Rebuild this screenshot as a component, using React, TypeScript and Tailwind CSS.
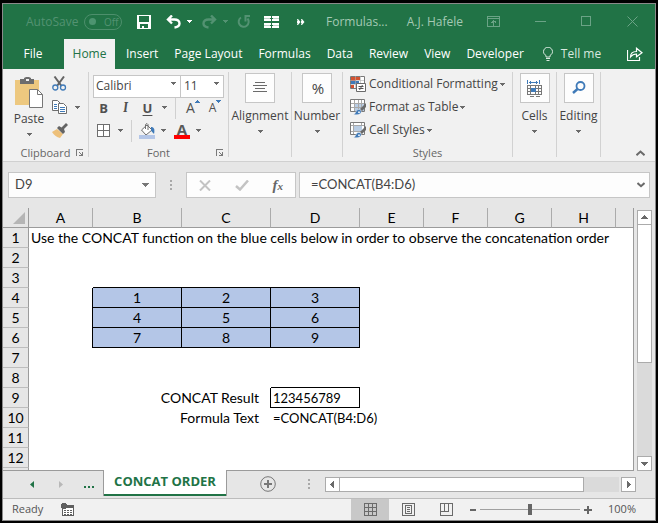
import type { ReactNode } from "react";

const CELL_FONT = "font-['Lato','Open_Sans',sans-serif]";

function Caret({ className = "text-[#6a6a6a]" }: { className?: string }) {
  return (
    <svg width="5" height="3" viewBox="0 0 5 3" shapeRendering="crispEdges" className={`shrink-0 fill-current ${className}`} aria-hidden="true">
      <path d="M0 0h5v1H4v1H3v1H2V2H1V1H0z" />
    </svg>
  );
}

function Launcher({ label }: { label: string }) {
  return (
    <button type="button" aria-label={label} className="absolute right-1 bottom-0">
      <svg width="8" height="8" viewBox="0 0 8 8" shapeRendering="crispEdges" className="fill-[#7a7a7a]">
        <path d="M0 0h7v1H1v6H0zM3 3h1v1h1v1h1V3h1v4H3V6h2V5H4V4H3z" />
      </svg>
    </button>
  );
}

/* ---------- Title bar ---------- */

function TitleBar() {
  return (
    <header className="flex h-[35px] items-center pr-[17px] pl-[23px] text-[12px] text-[#539272]">
      <label className="flex w-[96px] shrink-0 items-center justify-between">
        AutoSave
        <input type="checkbox" role="switch" className="peer sr-only" />
        <span className="flex h-4 w-[38px] items-center gap-2 rounded-full border border-[#4d8f6c] pl-1 text-[10px] leading-none">
          <span className="size-[7px] rounded-full bg-[#4d9470]" />
          Off
        </span>
      </label>
      <button type="button" aria-label="Save" className="ml-[15px] text-white">
        <svg width="14" height="14" viewBox="0 0 14 14" shapeRendering="crispEdges" fill="currentColor">
          <path fillRule="evenodd" d="M0 0h14v14H0zM2 1v6h10V1zM3 9v4h2v-2h2v2h4V9z" />
        </svg>
      </button>
      <button type="button" aria-label="Undo" className="ml-[15px] flex items-center gap-1.5 text-white">
        <svg width="15" height="14" viewBox="0 0 15 14" fill="none" stroke="currentColor" strokeWidth="2.400">
          <path d="M6 0.500 2 4.500l4 4M2 4.500h6.500c3 0 5 1.500 5 4 0 2.300-1.500 3.500-5 4" />
        </svg>
        <Caret className="text-white" />
      </button>
      <button type="button" aria-label="Redo" className="ml-[10px] flex items-center gap-1.5">
        <svg width="15" height="14" viewBox="0 0 15 14" fill="none" stroke="currentColor" strokeWidth="2.400">
          <path d="M9 0.500l4 4-4 4M13 4.500H6.500c-3 0-5 1.500-5 4 0 2.300 1.500 3.500 5 4" />
        </svg>
        <Caret className="text-[#539272]" />
      </button>
      <button type="button" aria-label="Repeat" className="ml-[9px]">
        <svg width="14" height="14" viewBox="0 0 14 14" fill="none" stroke="currentColor" strokeWidth="2">
          <path d="M4 2.500A5 5 0 1 0 10.500 3.500M8.500 6.500V1H13" />
        </svg>
      </button>
      <button type="button" aria-label="Arrange windows" className="ml-[13px] text-white">
        <svg width="15" height="12" viewBox="0 0 15 12" shapeRendering="crispEdges" fill="currentColor">
          <path d="M0 0h7v2H0zM8 0h7v2H8zM0 3h7v2H0zM8 3h7v2H8zM0 7h7v2H0zM8 7h7v2H8zM0 10h7v2H0zM8 10h7v2H8z" />
          <path d="M0 1h6v4H0zM9 1h6v4H9zM0 8h6v4H0zM9 8h6v4H9z" fillOpacity="0.7" />
        </svg>
      </button>
      <button type="button" aria-label="More commands" className="ml-[18px] text-white">
        <svg width="8" height="6" viewBox="0 0 8 6" fill="currentColor">
          <path d="M0 0h1l2.500 3L1 6H0l1-3zM4 0h1l2.500 3L5 6H4l1-3z" />
          <path d="M0 1.500 2 3 0 4.500zM4 1.500 6 3 4 4.500z" />
        </svg>
      </button>
      <span className="ml-[21px] text-[#a4c9b4]">Formulas...</span>
      <span className="mr-auto ml-[19px] whitespace-nowrap text-[#a4c9b4]">A.J. Hafele</span>
      <div className="flex items-center gap-[35px] text-[#6ba386]">
        <button type="button" aria-label="Ribbon display options">
          <svg width="13" height="11" viewBox="0 0 13 11" fill="none" stroke="currentColor" shapeRendering="crispEdges">
            <path d="M.5.500h12v10H.500zM1 2.500h11M6.500 4v6M4 6.500h1v-1h1M9 6.500H8v-1H7" />
          </svg>
        </button>
        <button type="button" aria-label="Minimize">
          <svg width="11" height="11" viewBox="0 0 11 11" stroke="currentColor" shapeRendering="crispEdges">
            <path d="M0 5.500h11" />
          </svg>
        </button>
        <button type="button" aria-label="Maximize">
          <svg width="11" height="11" viewBox="0 0 11 11" fill="none" stroke="currentColor" shapeRendering="crispEdges">
            <path d="M.5.500h9v9h-9z" />
          </svg>
        </button>
        <button type="button" aria-label="Close">
          <svg width="11" height="11" viewBox="0 0 11 11" stroke="currentColor">
            <path d="M.5.500l10 10M10.500.500l-10 10" />
          </svg>
        </button>
      </div>
    </header>
  );
}

/* ---------- Ribbon tabs ---------- */

const TABS = ["Insert", "Page Layout", "Formulas", "Data", "Review", "View", "Developer"];

function RibbonTabs() {
  return (
    <nav className="flex h-[30px] items-stretch pr-3 pl-3 text-[12px] whitespace-nowrap text-white">
      <button type="button" className="mr-[13px] w-9">File</button>
      <button type="button" className="w-[51px] bg-[#f1f1f1] text-[#217346]">Home</button>
      <div className="ml-[11px] flex gap-4">
        {TABS.map((tab) => (
          <button key={tab} type="button">{tab}</button>
        ))}
        <button type="button" className="ml-[3px] flex items-center gap-2 text-[#d8e8df]">
          <svg width="10" height="14" viewBox="0 0 10 14" fill="none" stroke="currentColor">
            <path d="M3 10V8.500C1.500 7.500.5 6.500.5 4.700a4.300 4.300 0 0 1 9 0C9.500 6.500 8.500 7.500 7 8.500V10zM3 11.500h4M3.500 13.500h3" />
          </svg>
          Tell me
        </button>
      </div>
      <button type="button" aria-label="Share" className="ml-auto">
        <svg width="16" height="14" viewBox="0 0 16 14" fill="none" stroke="currentColor" strokeWidth="1.200">
          <path d="M.5 3v10.500h12V10M3.500 10c0-4 2.500-5.500 6-5.500V1.200l5.500 4.500-5.500 4V7C6.500 7 5 8 3.500 10z" />
        </svg>
      </button>
    </nav>
  );
}

/* ---------- Ribbon ---------- */

function Group({ width, label, children }: { width: string; label?: string; children: ReactNode }) {
  return (
    <section className={`relative flex h-[85px] shrink-0 flex-col border-r border-[#d2d2d2] ${width}`}>
      {children}
      {label && <h2 className="mt-auto text-center text-[11px] leading-2 text-[#666]">{label}</h2>}
    </section>
  );
}

function Collapsed({ width, label, children }: { width: string; label: string; children: ReactNode }) {
  return (
    <Group width={width}>
      <button type="button" className="flex flex-col items-center pt-px text-[12px] leading-4">
        <span className="flex size-[30px] items-center justify-center border border-[#c6c6c6] bg-[#fdfdfd]">{children}</span>
        <span className="mt-[5px]">{label}</span>
        <Caret className="mt-[6px] text-[#6a6a6a]" />
      </button>
    </Group>
  );
}

function PasteIcon() {
  return (
    <svg width="28" height="31" viewBox="0 0 28 31">
      <path d="M0 3h24v25H0z" fill="#edc87f" />
      <path d="M5 2h4V1l2-1h3l2 1v1h3v5H5z" fill="#6d6d6d" />
      <path d="M11 2h3v2h-3z" fill="#f1f1f1" />
      <path d="M14.500 12.500h8l5 5v13h-13z" fill="#fff" stroke="#777" />
      <path d="M22.500 12.500v5h5" fill="none" stroke="#777" />
    </svg>
  );
}

function CutIcon() {
  return (
    <svg width="15" height="15" viewBox="0 0 15 15" fill="none">
      <path d="M2.500.500 9.500 10M12 .5 5 10" stroke="#646464" strokeWidth="2" />
      <circle cx="3.300" cy="11.500" r="2.500" stroke="#3f7ab8" strokeWidth="1.300" />
      <circle cx="11" cy="11.500" r="2.500" stroke="#3f7ab8" strokeWidth="1.300" />
    </svg>
  );
}

function CopyIcon() {
  return (
    <svg width="16" height="14" viewBox="0 0 16 14" fill="#fff" stroke="#6e6e6e">
      <path d="M.5.500h5l3 3v7h-8z" />
      <path d="M2 4.500h3M2 6.500h3M2 8.500h3" stroke="#3f7ab8" />
      <path d="M6.500 3.500h5l3 3v7h-8z" />
      <path d="M8 7.500h5M8 9.500h5M8 11.500h5" stroke="#3f7ab8" />
    </svg>
  );
}

function BrushIcon() {
  return (
    <svg width="16" height="15" viewBox="0 0 16 15">
      <path d="M0 9l5-3 6 5-3 4c-3-.5-6-3-8-6z" fill="#edc07a" />
      <path d="M5 5l2-2 2.500 1.500L14 0l2 2-4 4 1 3-2 2z" fill="#646464" />
    </svg>
  );
}

function Clipboard() {
  return (
    <Group width="w-[86px]" label="Clipboard">
      <div className="flex gap-2 pl-[11px]">
        <button type="button" className="flex w-[30px] flex-col items-center pt-[5px] text-[12px] leading-4">
          <PasteIcon />
          <span className="mt-[3px]">Paste</span>
          <Caret className="mt-[6px] text-[#6a6a6a]" />
        </button>
        <div className="flex flex-col gap-[9px] pt-1">
          <button type="button" aria-label="Cut"><CutIcon /></button>
          <button type="button" aria-label="Copy" className="flex items-center gap-[7px]"><CopyIcon /><Caret /></button>
          <button type="button" aria-label="Format Painter"><BrushIcon /></button>
        </div>
      </div>
      <Launcher label="Clipboard settings" />
    </Group>
  );
}

function Divider() {
  return <span className="h-[22px] w-px bg-[#d0d0d0]" />;
}

function FontGroup() {
  return (
    <Group width="w-[140px]" label="Font">
      <div className="flex pl-1">
        <div className="relative w-[88px]">
          <select aria-label="Font name" className="h-[23px] w-full appearance-none border border-[#c6c6c6] bg-white pl-[2px] text-[12px] text-[#444]">
            <option>Calibri</option>
          </select>
          <span className="pointer-events-none absolute top-[10px] right-[5px]"><Caret /></span>
        </div>
        <div className="relative w-[43px]">
          <select aria-label="Font size" className="h-[23px] w-full appearance-none border border-l-0 border-[#c6c6c6] bg-white pl-[3px] text-[12px] text-[#444]">
            <option>11</option>
          </select>
          <span className="pointer-events-none absolute top-[10px] right-[5px]"><Caret /></span>
        </div>
      </div>
      <div className="flex h-5 items-center pl-[9px] text-[13px] leading-5 text-[#505050]">
        <button type="button" className="w-[11px] font-bold">B</button>
        <button type="button" className="ml-[11px] w-[11px] font-serif font-bold italic">I</button>
        <button type="button" className="ml-[11px] w-[11px] font-bold underline underline-offset-2">U</button>
        <button type="button" aria-label="Underline styles" className="mr-[8px] ml-[9px]"><Caret /></button>
        <Divider />
        <button type="button" aria-label="Increase font size" className="ml-[10px] flex items-start text-[14px] leading-5">
          A
          <svg width="5" height="3" viewBox="0 0 5 3" className="mt-[2px] fill-[#3f7ab8]" shapeRendering="crispEdges"><path d="M0 3V2h1V1h1V0h1v1h1v1h1v1z" /></svg>
        </button>
        <button type="button" aria-label="Decrease font size" className="ml-[9px] flex items-start text-[12px] leading-5">
          A
          <Caret className="mt-[2px] text-[#3f7ab8]" />
        </button>
      </div>
      <div className="flex h-[26px] items-center pl-2">
        <button type="button" aria-label="Borders" className="flex items-center gap-2">
          <svg width="13" height="13" viewBox="0 0 13 13" fill="#fff" stroke="#6e6e6e" shapeRendering="crispEdges"><path d="M.5.500h12v12H.500zM6.500 0v13M0 6.500h13" /></svg>
          <Caret />
        </button>
        <span className="ml-2 flex"><Divider /></span>
        <button type="button" aria-label="Fill color" className="ml-[7px] flex items-center gap-1.5">
          <svg width="16" height="16" viewBox="0 0 16 16">
            <path d="M2.500 7 8 2l5 5-6 5z" fill="#fff" stroke="#6e6e6e" />
            <path d="M6.500 6V1.500L8 .5l1 1V7" fill="none" stroke="#6e6e6e" />
            <path d="M12 4c3 0 4 2 3 7-1-1-3-3-3-4z" fill="#3f7ab8" />
            <path d="M0 12h16v4H0z" fill="#b4c6e7" />
          </svg>
          <Caret />
        </button>
        <button type="button" aria-label="Font color" className="ml-[8px] flex items-center gap-1.5">
          <span className="flex h-4 w-4 items-center justify-center border-b-4 border-[#f00] text-[15px] leading-3 font-bold text-[#5a5a5a]">A</span>
          <Caret />
        </button>
      </div>
      <Launcher label="Font settings" />
    </Group>
  );
}

function GridIcon({ fill }: { fill: ReactNode }) {
  return (
    <svg width="16" height="16" viewBox="0 0 16 16">
      <path d="M.5.500h14v12H.500z" fill="#fff" stroke="#7a7a7a" />
      {fill}
    </svg>
  );
}

const BRUSH = (
  <>
    <path d="M16 4v4l-4 4-2-2z" fill="#6a6a6a" />
    <path d="M3.500 15.500c2 0 2-4 4.500-5 3-.5 4 2 2.500 4-2 1.500-5 1.500-7 1z" fill="#3f7ab8" stroke="#f1f1f1" strokeWidth="0.500" />
    <path d="M8 12.500h2v1.500H8z" fill="#d7e4f2" />
  </>
);

function StylesGroup() {
  const rows = [
    {
      label: "Conditional Formatting",
      icon: (
        <GridIcon
          fill={
            <>
              <path d="M1 1h5v4H1zM1 9h3v3H1z" fill="#d35230" />
              <path d="M6 1h4v3H6z" fill="#d35230" />
              <path d="M1 5h8v3H1z" fill="#3f7ab8" />
              <path d="M0 4.500h14M0 8.500h14M5.500 0v12M10.500 0v12" stroke="#b0b0b0" strokeWidth="0.600" />
              <path d="M6.500 7.500h9v8h-9z" fill="#fff" stroke="#6a6a6a" />
              <path d="M8.500 10.500h5M8.500 12.500h5M12.500 9l-3 5" stroke="#555" />
            </>
          }
        />
      ),
    },
    {
      label: "Format as Table",
      icon: (
        <GridIcon
          fill={
            <>
              <path d="M4 4h10v8H4z" fill="#b9cde4" />
              <path d="M1 4.500h13M1 8.500h13M4.500 1v11M8.500 1v11M11.500 1v11" stroke="#a8a8a8" />
              {BRUSH}
            </>
          }
        />
      ),
    },
    {
      label: "Cell Styles",
      icon: (
        <GridIcon
          fill={
            <>
              <path d="M1 3.500h13M1 9.500h13M3.500 1v11M11.500 1v11" stroke="#a8a8a8" />
              <path d="M4 4h8v5H4z" fill="#b9cde4" />
              {BRUSH}
            </>
          }
        />
      ),
    },
  ];
  return (
    <Group width="w-[170px]" label="Styles">
      <div className="flex flex-col gap-[7px] pt-1 pl-[7px]">
        {rows.map((row) => (
          <button key={row.label} type="button" className="flex items-center text-[12px] leading-4 whitespace-nowrap">
            {row.icon}
            <span className="mr-[2px] ml-[3px]">{row.label}</span>
            <Caret />
          </button>
        ))}
      </div>
    </Group>
  );
}

function Ribbon() {
  return (
    <div className="flex border-b border-[#d0d0d0] bg-[#f1f1f1] pt-[3px] pb-1 text-[#444]">
      <Clipboard />
      <FontGroup />
      <Collapsed width="w-[63px]" label="Alignment">
        <svg width="14" height="12" viewBox="0 0 14 12" stroke="#6a6a6a" shapeRendering="crispEdges"><path d="M2 .5h10M0 3.500h14M2 6.500h10M0 9.500h14" /></svg>
      </Collapsed>
      <Collapsed width="w-[51px]" label="Number"><span className="pl-[2px] text-[15px]">%</span></Collapsed>
      <StylesGroup />
      <Collapsed width="w-[44px]" label="Cells">
        <svg width="16" height="17" viewBox="0 0 16 17" fill="none" shapeRendering="crispEdges">
          <path d="M.5 0v4M12.500 0v4M2 2.500h9M3.500 1v3M9.500 1v3" stroke="#3f7ab8" />
          <path d="M.5 5.500h14v9H.500zM0 8.500h15M0 11.500h15M3.500 5v10M8.500 5v10M11.500 5v10M3 16.500h4M9 16.500h4" stroke="#777" />
          <path d="M4 8h5v4H4z" fill="#3f7ab8" />
        </svg>
      </Collapsed>
      <Collapsed width="w-[44px]" label="Editing">
        <svg width="14" height="14" viewBox="0 0 14 14" fill="none" stroke="#3f7ab8"><circle cx="8.500" cy="5" r="4" strokeWidth="1.800" /><path d="M5.500 8 1 12" strokeWidth="2.500" /></svg>
      </Collapsed>
      <button type="button" aria-label="Collapse ribbon" className="mt-auto mr-[10px] mb-px ml-auto">
        <svg width="9" height="6" viewBox="0 0 9 6" fill="none" stroke="#6a6a6a" strokeWidth="2"><path d="M.5 5.200 4.500 1.500l4 3.700" /></svg>
      </button>
    </div>
  );
}

/* ---------- Formula bar ---------- */

function Dots({ className = "" }: { className?: string }) {
  return (
    <svg width="2" height="10" viewBox="0 0 2 10" className={`shrink-0 fill-[#a8a8a8] ${className}`} shapeRendering="crispEdges" aria-hidden="true">
      <path d="M0 0h2v2H0zM0 4h2v2H0zM0 8h2v2H0z" />
    </svg>
  );
}

function FormulaBar() {
  return (
    <div className={`flex items-center py-[10px] pr-[5px] pl-[5px] text-[13px] text-[#444] ${CELL_FONT}`}>
      <div className="flex h-[26px] w-[148px] shrink-0 items-center border border-[#c6c6c6] bg-[#fdfdfd] pr-[6px]">
        <input aria-label="Name box" defaultValue="D9" className="min-w-0 flex-1 bg-transparent pl-[6px] outline-none" />
        <button type="button" aria-label="Show names">
          <svg width="7" height="4" viewBox="0 0 7 4" className="fill-[#777]" shapeRendering="crispEdges"><path d="M0 0h7v1H6v1H5v1H4v1H3V3H2V2H1V1H0z" /></svg>
        </button>
      </div>
      <Dots className="mx-[14px]" />
      <div className="flex h-[26px] w-[110px] shrink-0 items-center justify-between border border-[#c6c6c6] bg-[#fdfdfd] pr-3 pl-3">
        <button type="button" aria-label="Cancel">
          <svg width="12" height="11" viewBox="0 0 12 11" stroke="#c3c3c3" strokeWidth="2"><path d="M1 .5l10 10M11 .5l-10 10" /></svg>
        </button>
        <button type="button" aria-label="Enter">
          <svg width="14" height="11" viewBox="0 0 14 11" fill="none" stroke="#c3c3c3" strokeWidth="2.500"><path d="M1 6l4 3.500 8-9" /></svg>
        </button>
        <button type="button" className="font-['Liberation_Serif',serif] text-[15px] leading-4 font-bold text-[#666] italic">
          f<span className="text-[11px]">x</span>
        </button>
      </div>
      <div className="ml-[3px] flex h-[26px] min-w-0 flex-1 items-center border border-[#c6c6c6] bg-[#fdfdfd] pr-1">
        <input aria-label="Formula" defaultValue="=CONCAT(B4:D6)" className="min-w-0 flex-1 bg-transparent pl-[11px] outline-none" />
        <button type="button" aria-label="Expand formula bar">
          <svg width="8" height="6" viewBox="0 0 8 6" fill="none" stroke="#6a6a6a" strokeWidth="2"><path d="M.5 1 4 4.200 7.500 1" /></svg>
        </button>
      </div>
    </div>
  );
}

/* ---------- Sheet ---------- */

const COLUMNS = ["A", "B", "C", "D", "E", "F", "G", "H"];
const BLUE_ROWS: Record<number, number[]> = { 4: [1, 2, 3], 5: [4, 5, 6], 6: [7, 8, 9] };

function SheetRow({ row }: { row: number }) {
  const blue = BLUE_ROWS[row];
  let cells: ReactNode;
  if (row === 1) {
    cells = <td colSpan={9} className="pl-[2px]">Use the CONCAT function on the blue cells below in order to observe the concatenation order</td>;
  } else if (row === 3) {
    cells = (
      <>
        <td />
        <td colSpan={3} className="border-b border-black" />
        <td colSpan={5} />
      </>
    );
  } else if (blue) {
    cells = (
      <>
        <td className="border-r border-black" />
        {blue.map((value) => (
          <td key={value} className="border-r border-b border-black bg-[#b4c6e7] text-center">{value}</td>
        ))}
        <td colSpan={5} />
      </>
    );
  } else if (row === 8) {
    cells = (
      <>
        <td colSpan={3} />
        <td className="border-b border-black" />
        <td colSpan={5} />
      </>
    );
  } else if (row === 9) {
    cells = (
      <>
        <td />
        <td colSpan={2} className="border-r border-black pr-[11px] text-right">CONCAT Result</td>
        <td className="border-r border-b border-black pl-[2px] text-[13px]">123456789</td>
        <td colSpan={5} />
      </>
    );
  } else if (row === 10) {
    cells = (
      <>
        <td />
        <td colSpan={2} className="pr-3 text-right">Formula Text</td>
        <td colSpan={6} className="pl-[2px] text-[13px]">=CONCAT(B4:D6)</td>
      </>
    );
  } else {
    cells = <td colSpan={9} />;
  }
  return (
    <tr className="h-5">
      <th scope="row" className="border-r border-b border-r-[#9b9b9b] border-b-[#bdbdbd] bg-[#e6e6e6] font-normal">{row}</th>
      {cells}
    </tr>
  );
}

function Sheet() {
  return (
    <div className={`min-w-0 flex-1 overflow-hidden border-r border-b border-[#9b9b9b] bg-white text-[14px] leading-[18px] text-black ${CELL_FONT}`}>
      <table className="w-full table-fixed border-separate border-spacing-0 whitespace-nowrap">
        <colgroup>
          <col className="w-[26px]" />
          <col className="w-16" />
          <col className="w-[89px]" />
          <col className="w-[89px]" />
          <col className="w-[89px]" />
          <col className="w-16" />
          <col className="w-16" />
          <col className="w-16" />
          <col className="w-16" />
          <col />
        </colgroup>
        <thead>
          <tr className="h-5 bg-[#e6e6e6]">
            <td className="border-r border-b border-[#9b9b9b]">
              <svg width="12" height="12" viewBox="0 0 12 12" className="ml-[10px] fill-[#b5b5b5]" aria-hidden="true"><path d="M12 0v12H0z" /></svg>
            </td>
            {COLUMNS.map((name) => (
              <th key={name} scope="col" className="border-r border-b border-r-[#ababab] border-b-[#9b9b9b] font-normal">{name}</th>
            ))}
            <td className="border-b border-[#9b9b9b]" />
          </tr>
        </thead>
        <tbody>
          {Array.from({ length: 12 }, (_, i) => (
            <SheetRow key={i + 1} row={i + 1} />
          ))}
          <tr className="h-[2px]">
            <td className="border-r border-[#9b9b9b] bg-[#e6e6e6]" />
            <td colSpan={9} />
          </tr>
        </tbody>
      </table>
    </div>
  );
}

function ScrollButton({ label, d }: { label: string; d: string }) {
  return (
    <button type="button" aria-label={label} className="flex size-[15px] shrink-0 items-center justify-center border border-[#ababab] bg-white">
      <svg width="7" height="7" viewBox="0 0 7 7" className="fill-[#6a6a6a]" shapeRendering="crispEdges"><path d={d} /></svg>
    </button>
  );
}

function VerticalScroll() {
  return (
    <div className="mr-[3px] ml-[3px] flex w-[15px] flex-col bg-[#dadada]">
      <div className="h-[2px] bg-[#e6e6e6]" />
      <ScrollButton label="Scroll up" d="M3 1h1v1h1v1h1v1h1v1H0V4h1V3h1V2h1z" />
      <div className="h-[138px] border border-t-0 border-[#ababab] bg-white" />
      <div className="flex-1" />
      <ScrollButton label="Scroll down" d="M0 2h7v1H6v1H5v1H4v1H3V5H2V4H1V3H0z" />
    </div>
  );
}

/* ---------- Sheet tabs and status bar ---------- */

function SheetTabs() {
  return (
    <div className="flex h-7 items-start border-b border-[#bcbcbc] pr-[19px]">
      <div className="flex h-[26px] w-[100px] shrink-0 items-center pl-[27px]">
        <button type="button" aria-label="Previous sheet"><svg width="4" height="7" viewBox="0 0 4 7" className="fill-[#217346]"><path d="M4 0v7L0 3.500z" /></svg></button>
        <button type="button" aria-label="Next sheet" className="ml-[25px]"><svg width="4" height="7" viewBox="0 0 4 7" className="fill-[#b8b8b8]"><path d="M0 0v7l4-3.500z" /></svg></button>
        <button type="button" aria-label="More sheets" className="ml-[21px]"><svg width="11" height="2" viewBox="0 0 11 2" className="mt-[6px] fill-[#217346]" shapeRendering="crispEdges"><path d="M0 0h2v2H0zM4 0h2v2H4zM8 0h2v2H8z" /></svg></button>
      </div>
      <button type="button" className="-mt-px flex h-[26px] w-[124px] shrink-0 flex-col border-x border-[#9b9b9b] bg-white text-[13px] font-bold text-[#217346]">
        <span className="flex w-full flex-1 items-center justify-center border-b-2 border-[#217346]">CONCAT ORDER</span>
      </button>
      <button type="button" aria-label="New sheet" className="mt-[5px] ml-[33px] shrink-0">
        <svg width="16" height="16" viewBox="0 0 16 16" fill="none" stroke="#777"><circle cx="8" cy="8" r="7.300" /><path d="M8 4v8M4 8h8" strokeWidth="2" /></svg>
      </button>
      <Dots className="mt-2 mr-[15px] ml-auto" />
      <div className="mt-[6px] flex h-[15px] w-[311px]">
        <ScrollButton label="Scroll left" d="M5 0v7H4V6H3V5H2V4H1V3h1V2h1V1h1V0z" />
        <div className="flex flex-1 bg-[#dadada]">
          <div className="w-[244px] border border-l-0 border-[#ababab] bg-white" />
        </div>
        <div className="w-[2px]" />
        <ScrollButton label="Scroll right" d="M2 0v7h1V6h1V5h1V4h1V3H5V2H4V1H3V0z" />
      </div>
    </div>
  );
}

function StatusBar() {
  return (
    <footer className="flex h-[21px] items-center bg-[#f1f1f1] pr-[19px] pl-[9px] text-[11px] text-[#555]">
      <span>Ready</span>
      <button type="button" aria-label="Record macro" className="ml-[18px]">
        <svg width="13" height="13" viewBox="0 0 13 13" shapeRendering="crispEdges">
          <path d="M1.500 2.500h11v10h-11z" fill="#fff" stroke="#5f5f5f" />
          <path d="M6 2h7v3H6zM3 7h2v1H3zM6 7h2v1H6zM9 7h2v1H9zM3 9h2v1H3zM6 9h2v1H6zM9 9h2v1H9zM3 11h2v1H3zM6 11h2v1H6zM9 11h2v1H9z" fill="#5f5f5f" />
          <circle cx="3" cy="3" r="3" fill="#5f5f5f" />
        </svg>
      </button>
      <div className="ml-auto flex self-stretch">
        <button type="button" aria-label="Normal view" className="flex w-[38px] items-center justify-center bg-[#c8c8c8]">
          <svg width="13" height="13" viewBox="0 0 13 13" fill="none" stroke="#6a6a6a" shapeRendering="crispEdges"><path d="M.5.500h12v12H.500zM0 4.500h13M0 8.500h13M4.500 0v13M8.500 0v13" /></svg>
        </button>
        <button type="button" aria-label="Page layout view" className="flex w-[38px] items-center justify-center">
          <svg width="13" height="13" viewBox="0 0 13 13" fill="none" stroke="#6a6a6a" shapeRendering="crispEdges"><path d="M.5.500h12v12H.500zM3.500 2.500h6v8h-6zM5 4.500h3M5 6.500h3M5 8.500h3" /></svg>
        </button>
        <button type="button" aria-label="Page break view" className="flex w-[38px] items-center justify-center">
          <svg width="13" height="13" viewBox="0 0 13 13" fill="none" stroke="#6a6a6a" shapeRendering="crispEdges"><path d="M.5.500h12v12H.500zM4.500 0v8M8.500 0v8M0 8.500h9" /></svg>
        </button>
      </div>
      <button type="button" aria-label="Zoom out" className="ml-[5px] h-[2px] w-[6px] bg-[#666]" />
      <input
        type="range"
        aria-label="Zoom"
        min="0"
        max="200"
        defaultValue="100"
        className="mx-1 h-[11px] w-[100px] appearance-none bg-transparent [&::-webkit-slider-runnable-track]:h-px [&::-webkit-slider-runnable-track]:bg-[#a0a0a0] [&::-webkit-slider-thumb]:mt-[-5px] [&::-webkit-slider-thumb]:h-[11px] [&::-webkit-slider-thumb]:w-1 [&::-webkit-slider-thumb]:appearance-none [&::-webkit-slider-thumb]:bg-[#666]"
      />
      <button type="button" aria-label="Zoom in">
        <svg width="8" height="8" viewBox="0 0 8 8" className="fill-[#666]" shapeRendering="crispEdges"><path d="M3 0h2v3h3v2H5v3H3V5H0V3h3z" /></svg>
      </button>
      <span className="ml-4">100%</span>
    </footer>
  );
}

export default function App() {
  return (
    <div className="flex min-h-screen flex-col bg-black pt-[3px] pr-[2px] pb-[2px] pl-[2px] font-['Open_Sans','Noto_Sans',sans-serif]">
      <main className="flex flex-1 flex-col border border-[#8a8a8a] bg-[#e6e6e6]">
        <div className="bg-[#217346]">
          <TitleBar />
          <RibbonTabs />
        </div>
        <Ribbon />
        <FormulaBar />
        <div className="flex flex-1">
          <Sheet />
          <VerticalScroll />
        </div>
        <SheetTabs />
        <StatusBar />
      </main>
    </div>
  );
}
